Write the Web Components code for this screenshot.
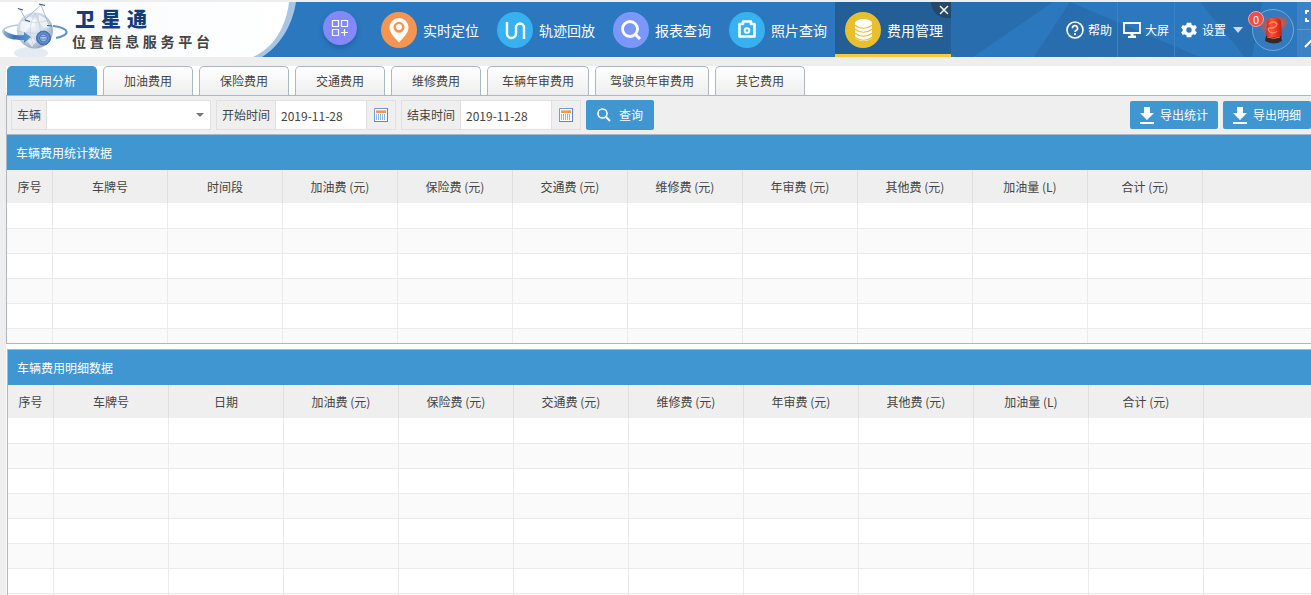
<!DOCTYPE html>
<html lang="zh-CN">
<head>
<meta charset="utf-8">
<title>卫星通 位置信息服务平台</title>
<style>
html, body { margin: 0; height: 100%; }
body {
  background: #eee; color: #444; overflow: hidden;
  font: 12px/18px "Noto Sans CJK SC", sans-serif;
  display: flex; flex-direction: column;
}
</style>
</head>
<body>
<app-header></app-header>
<app-workspace></app-workspace>
<script>
function define(name, html, setup) {
  const template = document.createElement('template');
  template.innerHTML = html;
  customElements.define(name, class extends HTMLElement {
    constructor() {
      super();
      this.attachShadow({ mode: 'open' }).append(template.content.cloneNode(true));
    }
    connectedCallback() { if (setup) setup(this, this.shadowRoot); }
  });
}

define('brand-logo', `
<style>
:host { display: grid; width: 310px; height: 55px; flex: none; }
svg, .words { grid-area: 1 / 1; }
.words { padding: 5px 0 0 72px; }
h1, p { margin: 0; text-align: justify; text-align-last: justify; }
h1 { width: 72px; margin-left: 3px; font-size: 20px; line-height: 24px; font-weight: 900; color: #123c7c; }
p { width: 138px; font-size: 14px; line-height: 20px; font-weight: 700; color: #444; }
</style>
<svg width="310" height="55" viewBox="0 2 310 55" aria-hidden="true">
  <defs>
    <linearGradient id="sky" x1="0" y1="0" x2="1" y2="0"><stop offset="0" stop-color="#fff"/><stop offset=".45" stop-color="#fafcfe"/><stop offset="1" stop-color="#fff"/></linearGradient>
    <radialGradient id="globe" cx=".42" cy=".38" r=".65"><stop offset="0" stop-color="#eef3f9"/><stop offset=".6" stop-color="#cdd8e7"/><stop offset="1" stop-color="#8fa4c5"/></radialGradient>
    <radialGradient id="lens"><stop offset="0" stop-color="#c6e0f3"/><stop offset=".55" stop-color="#7ea6d6"/><stop offset="1" stop-color="#3b6bb3"/></radialGradient>
    <linearGradient id="ring" x1="0" y1="0" x2="1" y2="0"><stop offset="0" stop-color="#8db1d2"/><stop offset=".4" stop-color="#3b73b2"/><stop offset="1" stop-color="#6297cd"/></linearGradient>
  </defs>
  <path d="M0 2H296C292 28 278 47 262 57H0Z" fill="#a7c5e4"/>
  <path d="M0 2H289C286 28 273 48 253 57H0Z" fill="url(#sky)"/>
  <ellipse cx="31" cy="53" rx="17" ry="6" fill="#dfe6f0" opacity=".8"/>
  <path d="M18 25C1 27-2 33 10 37" fill="none" stroke="#b3c7da" stroke-width="1.500"/>
  <path d="M53 26C70 28 71 35 56 38" fill="none" stroke="#5e91c5" stroke-width="2"/>
  <circle cx="35" cy="30.500" r="18" fill="url(#globe)"/>
  <path d="M21 22l8-5 8 3-3 6-6 2-3 6-5-4zM39 15l8 4 4 8-7 1-5-6zM27 41l6-3 3 4-4 5z" fill="#fff" opacity=".6"/>
  <path d="M17 31q18 5 36-1M35 13q-10 18 0 35M35 13q11 18 0 35M21 20q14 5 28 0" fill="none" stroke="#b4c1d4" stroke-width=".5"/>
  <path d="M4 30C1 40 17 40 24 40V43L31 37 24 32V35C15 36 9 34 4 30Z" fill="url(#ring)"/>
  <circle cx="43.500" cy="38" r="7" fill="url(#lens)" stroke="#4470b3"/>
  <circle cx="43.500" cy="38" r="4" fill="none" stroke="#3564aa" stroke-width=".8"/>
  <path d="M41 36.500h5M41 39h5" stroke="#4a7fbd" stroke-width=".9"/>
  <path d="M41 5L24 20M41 5L49 25M20 9L26 20" fill="none" stroke="#9aa8bc" stroke-width=".7"/>
  <path d="M39 4l6 1.500M18 8.500l5 1.500M25 20l5 1.500M47 25.500l5 .500" stroke="#3a5786" stroke-width="1.200"/>
</svg>
<div class="words"><h1>卫星通</h1><p>位置信息服务平台</p></div>`);

const NAV_ICONS = {
  pin: ['#f59551', '<path fill="#fff" fill-rule="evenodd" d="M18 6a9.500 9.500 0 0 1 9.500 9.500C27.500 21 22 26 18 30.500 14 26 8.500 21 8.500 15.500A9.500 9.500 0 0 1 18 6zm0 3.800a5.500 5.500 0 1 0 0 11 5.500 5.500 0 0 0 0-11z"/><circle cx="18" cy="15" r="3" fill="#fff"/>'],
  track: ['#37b1f0', '<path fill="none" stroke="#fff" stroke-width="2.400" d="M10 10v11.500a4.500 4.500 0 0 0 9 0v-6a4 4 0 0 1 8 0V27"/>'],
  search: ['#7b97fb', '<circle cx="17" cy="17" r="7.500" fill="none" stroke="#fff" stroke-width="2.800"/><path d="M22 22l5 5" stroke="#fff" stroke-width="3"/>'],
  camera: ['#37b1f0', '<path fill="none" stroke="#fff" stroke-width="2.600" stroke-linejoin="round" d="M10.500 12h3.500V9.500h8V12h3.500v12.500h-15z"/><circle cx="18" cy="18.500" r="2.300" fill="none" stroke="#fff" stroke-width="2"/>'],
  coins: ['#e8c02f', '<path fill="#fff" d="M10 11a8.500 4 0 0 1 17 0v14a8.500 4 0 0 1-17 0z"/><path fill="none" stroke="#e8c02f" stroke-width="1.200" d="M9.500 13q9 6.500 18 0M9.500 17q9 6.500 18 0M9.500 21q9 6.500 18 0M9.500 25q9 6.500 18 0" />']
};
define('nav-item', `
<style>
:host { display: block; position: relative; width: 116px; height: 55px; flex: none; }
a { display: flex; align-items: center; gap: 6px; box-sizing: border-box; height: 55px; padding-left: 10px; color: #fff; text-decoration: none; font-size: 14px; line-height: 20px; border-bottom: 3px solid transparent; padding-top: 3px; white-space: nowrap; }
:host([active]) a { background: #235e96; border-color: #f8c93d; }
svg { flex: none; }
button { display: none; position: absolute; top: 0; right: 0; width: 20px; height: 16px; padding: 0; border: 0; background: #24476c; border-radius: 0 0 0 16px; }
:host([active]) button { display: block; }
button svg { display: block; margin: 0 0 0 8px; }
</style>
<a href="#"><svg class="icon" width="36" height="36" viewBox="0 0 36 36" aria-hidden="true"></svg><slot></slot></a>
<button type="button" aria-label="关闭"><svg width="10" height="10" viewBox="0 0 10 10"><path d="M1 1l8 8M9 1L1 9" stroke="#fff" stroke-width="1.500"/></svg></button>`,
(host, root) => {
  const [color, glyph] = NAV_ICONS[host.getAttribute('icon')];
  root.querySelector('.icon').innerHTML = `<circle cx="18" cy="18" r="18" fill="${color}"/>${glyph}`;
});

const TOOL_ICONS = {
  help: '<svg width="18" height="18" viewBox="0 0 18 18"><circle cx="9" cy="9" r="8" fill="none" stroke="#fff" stroke-width="1.600"/><path d="M6.500 7.200a2.500 2.500 0 1 1 3.600 2.200Q9 10 9 11" fill="none" stroke="#fff" stroke-width="1.700"/><circle cx="9" cy="13.200" r="1.100" fill="#fff"/></svg>',
  screen: '<svg width="18" height="18" viewBox="0 0 18 18"><path d="M1 2h16v10H1z" fill="none" stroke="#fff" stroke-width="1.800"/><path d="M7.500 12h3v2.500H13V17H5v-2h2.500z" fill="#fff"/></svg>',
  gear: '<svg width="16" height="16" viewBox="0 0 24 24"><path fill="#fff" d="M21.400 13.500c.1-.5.100-1 .1-1.500s0-1-.1-1.500l2.400-2-2.400-4.100-3 1.100a9 9 0 0 0-2.500-1.400L15.400 1H8.600l-.5 3.100a9 9 0 0 0-2.500 1.400l-3-1.100L.2 8.500l2.400 2a9 9 0 0 0 0 3l-2.400 2 2.400 4.100 3-1.100a9 9 0 0 0 2.500 1.400l.5 3.100h6.800l.5-3.100a9 9 0 0 0 2.500-1.400l3 1.100 2.400-4.100zM12 16a4 4 0 1 1 0-8 4 4 0 0 1 0 8z"/></svg>'
};
define('header-tool', `
<style>
:host { display: block; flex: none; border-right: 1px solid #3b82c3; }
:host([icon=gear]) { border: 0; }
a { display: flex; align-items: center; gap: 4px; height: 55px; padding: 0 5px; color: #fff; text-decoration: none; white-space: nowrap; }
:host([icon=gear]) a { padding: 0 6px; gap: 5px; }
svg { flex: none; display: block; }
.arrow { display: none; margin-left: 2px; border: 5px solid transparent; border-top: 6px solid #c5dcf1; border-bottom: 0; }
:host([icon=gear]) .arrow { display: block; }
</style>
<a href="#"><span class="icon"></span><slot></slot><span class="arrow"></span></a>`,
(host, root) => { root.querySelector('.icon').innerHTML = TOOL_ICONS[host.getAttribute('icon')]; });

define('alarm-light', `
<style>
:host { display: block; position: relative; width: 42px; height: 42px; flex: none; }
svg { display: block; }
span { position: absolute; top: 2px; left: -4px; width: 16px; height: 16px; border-radius: 50%; background: #f04b4b; border: 1px solid #f3a0a0; box-sizing: border-box; color: #fff; font-size: 11px; line-height: 14px; text-align: center; }
</style>
<svg width="42" height="42" viewBox="0 0 42 42" aria-hidden="true">
  <defs><radialGradient id="glow"><stop offset="0" stop-color="#ff4a25"/><stop offset="1" stop-color="#ff4a25" stop-opacity="0"/></radialGradient>
  <linearGradient id="dome"><stop offset="0" stop-color="#c92a1c"/><stop offset=".35" stop-color="#ff5131"/><stop offset=".7" stop-color="#ee2f1b"/><stop offset="1" stop-color="#b5251a"/></linearGradient></defs>
  <circle cx="21" cy="21" r="20.500" fill="#347abc" stroke="#74a7d6"/>
  <circle cx="29" cy="14" r="8" fill="url(#glow)"/><circle cx="17" cy="17" r="10" fill="url(#glow)"/>
  <path d="M15 12q1-3 7-3t7 3l1 16H14z" fill="url(#dome)"/>
  <path d="M17 15q5-4 8 0-1 4-6 4t-1 4q5 2 7-1" fill="none" stroke="#ff8c68" stroke-width="1.300"/>
  <path d="M14 27q8 3 15 0l1 5q-8 5-17 0z" fill="#3a2722"/><path d="M15 28q7 3 13 0" fill="none" stroke="#a58472"/>
</svg><span>0</span>`);

define('app-header', `
<style>
:host { display: flex; align-items: center; position: relative; flex: none; height: 55px; margin-top: 2px; background: #2b78bf; overflow: hidden; }
.facets { position: absolute; top: 0; right: 0; }
.apps { width: 34px; height: 34px; flex: none; margin: 0 14px 4px 13px; padding: 0; border: 0; border-radius: 50%; background: #8389f8; box-shadow: 0 3px 5px #2362a5; display: grid; place-items: center; }
nav, .tools { display: flex; position: relative; align-items: center; flex: none; }
.tools { margin-left: auto; }
alarm-light { margin: 0 3px; }
.window { width: 14px; height: 55px; background: #5a98d0; display: grid; grid-template-rows: 27px 27px; gap: 1px; }
.window button { border: 0; padding: 0; background: #3d82c4; overflow: hidden; }
.window svg { display: block; }
</style>
<svg class="facets" width="411" height="55" viewBox="900 2 411 55" aria-hidden="true">
  <path fill="#286dae" d="M905 2H1053L973 57H955ZM1070 2L1200 57H1034ZM1200 2H1262L1252 57H1245Z"/>
</svg>
<brand-logo></brand-logo>
<button class="apps" type="button" aria-label="应用"><svg width="18" height="18" viewBox="0 0 18 18"><path d="M1.500 1.500h6v6h-6zM10.500 1.500h6v6h-6zM1.500 10.500h6v6h-6zM10 13.500h7M13.500 10v7" fill="none" stroke="#fff" stroke-width="1.200"/></svg></button>
<nav>
  <nav-item icon="pin">实时定位</nav-item><nav-item icon="track">轨迹回放</nav-item><nav-item icon="search">报表查询</nav-item><nav-item icon="camera">照片查询</nav-item><nav-item icon="coins" active>费用管理</nav-item>
</nav>
<div class="tools">
  <header-tool icon="help">帮助</header-tool><header-tool icon="screen">大屏</header-tool><header-tool icon="gear">设置</header-tool>
  <alarm-light></alarm-light>
  <div class="window">
    <button type="button" aria-label="全屏"><svg width="14" height="27"><path d="M12 9H9v3M9 16v3h3" fill="none" stroke="#fff" stroke-width="2"/></svg></button>
    <button type="button" aria-label="收起"><svg width="14" height="27"><path d="M8 17l7-7" fill="none" stroke="#fff" stroke-width="2"/></svg></button>
  </div>
</div>`);

define('tab-button', `
<style>
:host { display: block; flex: none; }
button { box-sizing: border-box; min-width: 90px; height: 29px; padding: 0 14px; border: 1px solid #a9b7c7; border-bottom: 0; border-radius: 5px 5px 0 0; background: linear-gradient(#fff, #eee); color: #444; font: inherit; display: block; }
:host([active]) button { background: #4096d1; border-color: #4096d1; color: #fff; }
</style>
<button type="button" role="tab"><slot></slot></button>`);

const FIELD = `
:host { display: flex; flex: none; box-sizing: border-box; height: 30px; border: 1px solid #dfe0e2; background: #efefef; }
label { padding: 0 5px; line-height: 28px; border-right: 1px solid #dfe0e2; white-space: nowrap; }
select, input { box-sizing: border-box; height: 28px; padding: 0 5px; border: 0; border-radius: 0; background: #fff; color: #444; font: inherit; outline: 0; }
`;
define('select-field', `
<style>${FIELD}
.box { position: relative; }
select { width: 163px; appearance: none; display: block; }
.box::after { content: ""; position: absolute; right: 6px; top: 12px; border: 4px solid transparent; border-top-color: #777; border-bottom: 0; pointer-events: none; }
</style>
<label for="value"><slot></slot></label><div class="box"><select id="value"><option></option></select></div>`);

define('date-field', `
<style>${FIELD}
input { width: 90px; }
button { width: 29px; padding: 0; border: 0; border-left: 1px solid #dfe0e2; background: #efefef; display: grid; place-items: center; }
</style>
<label for="value"><slot></slot></label><input id="value" type="text">
<button type="button" aria-label="选择日期"><svg width="14" height="14" viewBox="0 0 14 14"><path fill="#fff" stroke="#6f9bd8" d="M.5.5h13v13H.5z"/><path fill="#5c88c8" d="M0 13h14v1H0zM13 0h1v14h-1z"/><path fill="#ff934f" d="M2 2h10v3H2z"/><path fill="#ffb98a" d="M2 2h10v1H2z"/><path d="M2.500 6v6M4.500 6v6M6.500 6v6M8.500 6v6M10.500 6v6" stroke="#92b4e4"/></svg></button>`,
(host, root) => { root.querySelector('input').value = host.getAttribute('value'); });

const ACTION_ICONS = {
  search: '<svg width="14" height="14" viewBox="0 0 14 14"><circle cx="5.500" cy="5.500" r="4.500" fill="none" stroke="#fff" stroke-width="1.600"/><path d="M9 9l4 4" stroke="#fff" stroke-width="2"/></svg>',
  download: '<svg width="14" height="17" viewBox="0 0 14 17"><path fill="#fff" d="M4 0h6v6h4l-7 7-7-7h4zM0 15h14v2H0z"/></svg>'
};
define('action-button', `
<style>
:host { display: block; flex: none; }
button { display: flex; align-items: center; gap: 6px; height: 28px; padding: 0 10px; border: 0; border-radius: 2px; background: #4096d1; color: #fff; font: inherit; white-space: nowrap; }
:host([icon=search]) button { height: 30px; gap: 8px; padding: 0 11px; }
span { display: flex; }
</style>
<button type="button"><span></span><slot></slot></button>`,
(host, root) => { root.querySelector('span').innerHTML = ACTION_ICONS[host.getAttribute('icon')]; });

define('data-panel', `
<style>
:host { display: flex; flex-direction: column; overflow: hidden; }
h2 { margin: 0; flex: none; height: 35px; padding: 0 9px; background: #4096d1; color: #fff; font-size: 12px; line-height: 35px; font-weight: 400; }
.scroll { overflow: hidden; flex: 1; min-height: 0; background: #fff; }
table { width: 100%; table-layout: fixed; border-collapse: separate; border-spacing: 0; }
th, td { box-sizing: border-box; padding: 0; border-right: 1px solid #ebebee; border-bottom: 1px solid #ebebee; }
th { height: 34px; background: #efefef; font-weight: 400; text-align: center; line-height: 33px; border-right-color: #dfdfdf; border-bottom-color: #fff; white-space: nowrap; }
td { height: 25px; }
tr:nth-child(even) td { background: #fafafa; }
col { width: 115px; } col:first-child { width: 46px; } col:last-child { width: auto; }
th:last-child, td:last-child { border-right: 0; }
</style>
<h2><slot></slot></h2>
<div class="scroll"><table><colgroup></colgroup><thead><tr></tr></thead><tbody></tbody></table></div>`,
(host, root) => {
  const names = host.getAttribute('columns').split(',').concat('');
  root.querySelector('colgroup').innerHTML = '<col>'.repeat(names.length);
  root.querySelector('thead tr').innerHTML = names.map(n => `<th>${n}</th>`).join('');
  root.querySelector('tbody').innerHTML = ('<tr>' + '<td></td>'.repeat(names.length) + '</tr>').repeat(+host.getAttribute('rows'));
});

define('app-workspace', `
<style>
:host { display: flex; flex-direction: column; flex: 1; min-height: 0; margin: 9px 0 0 6px; background: #fff; }
.tabs { display: flex; gap: 6px; padding-left: 1px; flex: none; }
.report { border: 1px solid #a9b7c7; border-right: 0; flex: none; }
.bar { display: flex; align-items: center; height: 39px; gap: 5px; padding-left: 4px; box-sizing: border-box; background: #efefef; border-bottom: 1px solid #a9b7c7; }
.bar .export { margin-left: auto; }
.stats { height: 208px; }
.detail { flex: 1; min-height: 0; margin: 5px 0 0 1px; border: 1px solid #a9b7c7; border-width: 1px 0 0 1px; }
</style>
<div class="tabs" role="tablist">
  <tab-button active>费用分析</tab-button><tab-button>加油费用</tab-button><tab-button>保险费用</tab-button><tab-button>交通费用</tab-button><tab-button>维修费用</tab-button><tab-button>车辆年审费用</tab-button><tab-button>驾驶员年审费用</tab-button><tab-button>其它费用</tab-button>
</div>
<section class="report">
  <div class="bar">
    <select-field>车辆</select-field>
    <date-field value="2019-11-28">开始时间</date-field>
    <date-field value="2019-11-28">结束时间</date-field>
    <action-button icon="search">查询</action-button>
    <action-button class="export" icon="download">导出统计</action-button>
    <action-button icon="download">导出明细</action-button>
  </div>
  <data-panel class="stats" rows="7" columns="序号,车牌号,时间段,加油费 (元),保险费 (元),交通费 (元),维修费 (元),年审费 (元),其他费 (元),加油量 (L),合计 (元)">车辆费用统计数据</data-panel>
</section>
<data-panel class="detail" rows="40" columns="序号,车牌号,日期,加油费 (元),保险费 (元),交通费 (元),维修费 (元),年审费 (元),其他费 (元),加油量 (L),合计 (元)">车辆费用明细数据</data-panel>`);
</script>
</body>
</html>
